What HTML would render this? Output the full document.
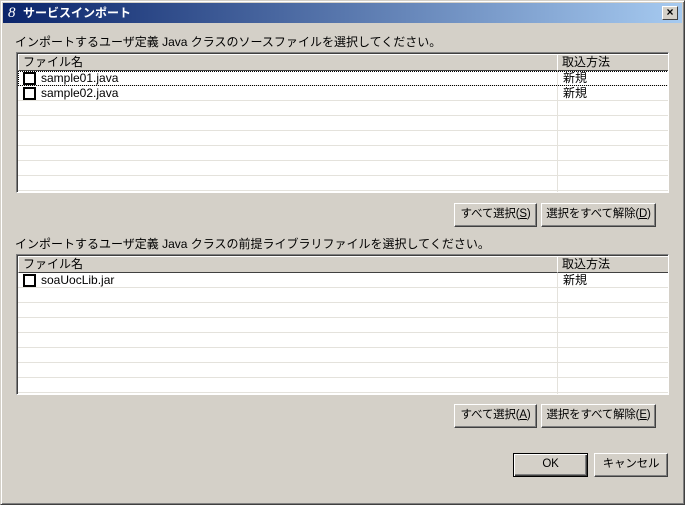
<!DOCTYPE html>
<html><head><meta charset="utf-8"><style>
*{margin:0;padding:0;box-sizing:border-box}
body{width:685px;height:505px;background:#d4d0c8;font-family:"Liberation Sans","Noto Sans CJK JP",sans-serif;font-size:12px;color:#000;position:relative;overflow:hidden}
.win{position:absolute;left:0;top:0;width:685px;height:505px;border:1px solid;border-color:#d4d0c8 #404040 #404040 #d4d0c8;box-shadow:inset 1px 1px 0 #fff,inset -1px -1px 0 #808080}
.title{position:absolute;left:3px;top:3px;width:679px;height:20px;background:linear-gradient(90deg,#0a246a,#a6caf0);color:#fff;font-weight:bold;font-size:12px;line-height:20px;padding-left:20px}
.logo{position:absolute;left:5px;top:0;font-style:italic;font-weight:normal;font-family:"Liberation Serif",serif;font-size:15px;color:#fff}
.close{position:absolute;left:662px;top:6px;width:16px;height:14px;background:#d4d0c8;border:1px solid;border-color:#fff #404040 #404040 #fff;color:#000;font-size:12px;line-height:11px;text-align:center;font-weight:bold}
.lbl{position:absolute;left:15px;font-size:12px}
.tbl{position:absolute;left:16px;width:653px;height:141px;background:#fff;border:1px solid;border-color:#808080 #fff #fff #808080;box-shadow:inset 1px 1px 0 #404040;overflow:hidden}
.hd{position:absolute;left:1px;top:1px;height:17px;background:#d4d0c8;border:1px solid;border-color:#fff #404040 #404040 #fff;line-height:15px;padding-left:4px}
.row{position:absolute;left:1px;width:651px;height:15px;border-bottom:1px solid #e4e2dc;line-height:14px}
.vl{position:absolute;left:540px;top:18px;bottom:0;width:1px;background:#e4e2dc}
.cb{position:absolute;left:5px;top:1px;width:13px;height:13px;border:2px solid #000;background:#fff}
.fn{position:absolute;left:23px}
.mt{position:absolute;left:545px}
.btn{position:absolute;height:24px;background:#d4d0c8;border:1px solid;border-color:#fff #404040 #404040 #fff;box-shadow:inset -1px -1px 0 #808080;text-align:center;line-height:21px;font-size:11.5px;white-space:nowrap;letter-spacing:-0.2px}
.def{border:1px solid #000;box-shadow:inset 1px 1px 0 #fff,inset -1px -1px 0 #404040,inset -2px -2px 0 #808080}
u{text-decoration:underline}
</style></head><body>
<div class="win"></div>
<div class="title"><span class="logo">8</span>サービスインポート</div>
<div class="close">×</div>

<div class="lbl" style="top:33px">インポートするユーザ定義 Java クラスのソースファイルを選択してください。</div>
<div class="tbl" style="top:52px">
 <div class="hd" style="width:540px">ファイル名</div>
 <div class="hd" style="left:540px;width:112px">取込方法</div>
 <div class="vl"></div>
 <div class="row" style="top:18px;outline:1px dotted #000;outline-offset:-1px"><div class="cb"></div><span class="fn">sample01.java</span><span class="mt">新規</span></div>
 <div class="row" style="top:33px"><div class="cb"></div><span class="fn">sample02.java</span><span class="mt">新規</span></div>
 <div class="row" style="top:48px"></div><div class="row" style="top:63px"></div>
 <div class="row" style="top:78px"></div><div class="row" style="top:93px"></div>
 <div class="row" style="top:108px"></div><div class="row" style="top:123px"></div>
</div>
<div class="btn" style="left:454px;top:203px;width:83px">すべて選択(<u>S</u>)</div>
<div class="btn" style="left:541px;top:203px;width:115px">選択をすべて解除(<u>D</u>)</div>

<div class="lbl" style="top:235px">インポートするユーザ定義 Java クラスの前提ライブラリファイルを選択してください。</div>
<div class="tbl" style="top:254px">
 <div class="hd" style="width:540px">ファイル名</div>
 <div class="hd" style="left:540px;width:112px">取込方法</div>
 <div class="vl"></div>
 <div class="row" style="top:18px"><div class="cb"></div><span class="fn">soaUocLib.jar</span><span class="mt">新規</span></div>
 <div class="row" style="top:33px"></div><div class="row" style="top:48px"></div>
 <div class="row" style="top:63px"></div><div class="row" style="top:78px"></div>
 <div class="row" style="top:93px"></div><div class="row" style="top:108px"></div>
 <div class="row" style="top:123px"></div>
</div>
<div class="btn" style="left:454px;top:404px;width:83px">すべて選択(<u>A</u>)</div>
<div class="btn" style="left:541px;top:404px;width:115px">選択をすべて解除(<u>E</u>)</div>

<div class="btn def" style="left:513px;top:453px;width:75px">OK</div>
<div class="btn" style="left:594px;top:453px;width:74px">キャンセル</div>
</body></html>
